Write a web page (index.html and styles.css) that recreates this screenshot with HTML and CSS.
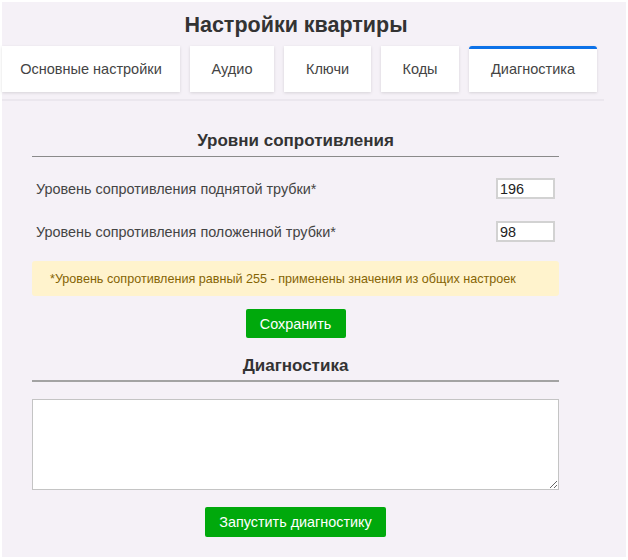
FILE: index.html
```html
<!DOCTYPE html>
<html lang="ru">
<head>
<meta charset="utf-8">
<title>Настройки квартиры</title>
<link rel="stylesheet" href="styles.css">
</head>
<body>
<div class="page">
  <h1 class="title">Настройки квартиры</h1>
  <div class="tabs">
    <div class="tab">Основные настройки</div>
    <div class="tab">Аудио</div>
    <div class="tab">Ключи</div>
    <div class="tab">Коды</div>
    <div class="tab active">Диагностика</div>
  </div>
  <div class="section">
    <h2 class="heading first">Уровни сопротивления</h2>
    <div class="row r1">
      <span class="label">Уровень сопротивления поднятой трубки*</span>
      <input class="field" type="text" value="196">
    </div>
    <div class="row r2">
      <span class="label">Уровень сопротивления положенной трубки*</span>
      <input class="field" type="text" value="98">
    </div>
    <div class="alert">*Уровень сопротивления равный 255 - применены значения из общих настроек</div>
    <div class="actions save-row"><button class="btn btn-save">Сохранить</button></div>
    <h2 class="heading second">Диагностика</h2>
    <textarea class="log"></textarea>
    <div class="actions run-row"><button class="btn btn-run">Запустить диагностику</button></div>
  </div>
</div>
</body>
</html>
```

FILE: styles.css
```css
* { box-sizing: border-box; }
html, body { margin: 0; padding: 0; background: #ffffff; }
body { font-family: "Liberation Sans", Arial, sans-serif; color: #333; }

.page {
  margin: 2px 0 0 2px;
  width: 624px;
  height: 555px;
  background: #f5f1f7;
  padding-top: 11px;
}

.title {
  margin: 0;
  font-size: 21.5px;
  line-height: 24px;
  font-weight: bold;
  color: #333;
  text-align: center;
  padding-right: 36px;
}

.tabs {
  margin-top: 9px;
  width: 602px;
  display: flex;
  gap: 10px;
  padding-bottom: 7px;
  border-bottom: 2px solid #ebe7ee;
}

.tab {
  height: 46px;
  display: flex;
  align-items: center;
  justify-content: center;
  padding: 0;
  background: #fff;
  font-size: 14.5px;
  color: #444;
  box-shadow: 0 1px 3px rgba(0,0,0,0.13);
  white-space: nowrap;
}
.tab:nth-child(1) { width: 178px; }
.tab:nth-child(2) { width: 84px; }
.tab:nth-child(3) { width: 87px; }
.tab:nth-child(4) { width: 78px; }
.tab:nth-child(5) { width: 128px; }

.tab.active {
  border-top: 3px solid #0d72e8;
  border-radius: 3px 3px 0 0;
  padding-bottom: 3px;
}

.section {
  margin-left: 30px;
  width: 527px;
}

.heading {
  margin: 0;
  font-size: 17px;
  line-height: 20px;
  font-weight: bold;
  color: #333;
  text-align: center;
}
.heading.first {
  margin-top: 30px;
  padding-bottom: 5px;
  border-bottom: 1px solid #8a8a8a;
}
.heading.second {
  margin-top: 18px;
  padding-bottom: 4px;
  border-bottom: 2px solid #a3a3a3;
}

.row {
  display: flex;
  align-items: center;
  justify-content: space-between;
  height: 21px;
  padding: 0 4px;
}
.row.r1 { margin-top: 21px; }
.row.r2 { margin-top: 22px; }

.label {
  font-size: 14.4px;
  color: #444;
}

.field {
  width: 59px;
  height: 21px;
  border: 2px solid #d2d2d2;
  background: #fff;
  padding: 0 2px;
  font-family: "Liberation Sans", Arial, sans-serif;
  font-size: 14.4px;
  color: #222;
  outline: none;
}

.alert {
  margin-top: 19px;
  height: 35px;
  background: #fff3cd;
  border-radius: 3px;
  padding-left: 18px;
  display: flex;
  align-items: center;
  font-size: 12.6px;
  color: #856404;
  white-space: nowrap;
}

.actions {
  display: flex;
  justify-content: center;
}
.save-row { margin-top: 13px; }
.run-row { margin-top: 17px; }

.btn {
  border: none;
  border-radius: 2px;
  background: #00a90c;
  color: #fff;
  font-family: "Liberation Sans", Arial, sans-serif;
  font-size: 14.4px;
  padding: 0;
  cursor: pointer;
  white-space: nowrap;
}
.btn-save { height: 29px; width: 100px; }
.btn-run { height: 30px; width: 181px; }

.log {
  display: block;
  margin-top: 17px;
  width: 527px;
  height: 91px;
  border: 1px solid #c4c4c4;
  background: #fff;
  border-radius: 0;
}
```
